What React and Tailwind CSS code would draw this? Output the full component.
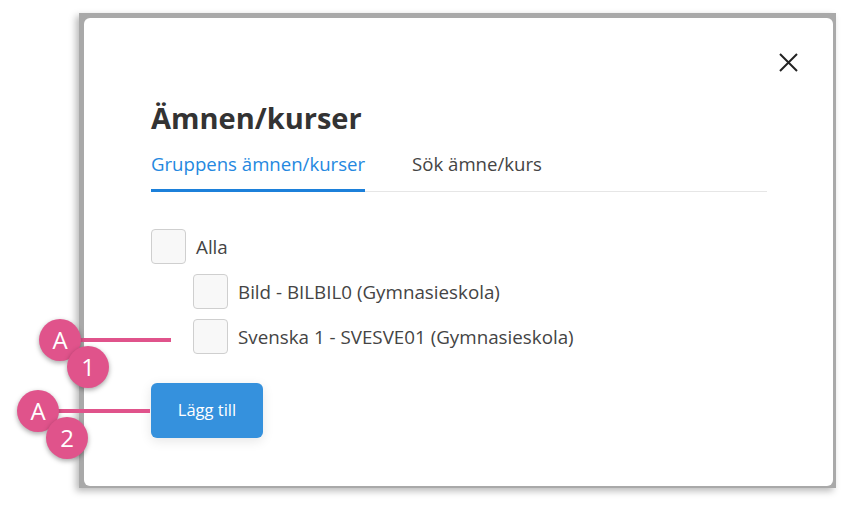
import { useState } from "react"

const items = [
  { id: "bild", label: "Bild - BILBIL0 (Gymnasieskola)" },
  { id: "svenska", label: "Svenska 1 - SVESVE01 (Gymnasieskola)" },
]

const Box = ({ checked, onClick }) => (
  <button
    onClick={onClick}
    className="w-[35px] h-[35px] shrink-0 rounded-[4px] border border-[#cfcfcf] bg-[#f8f8f8]"
  >
    {checked && <span className="text-[#2488e0] text-lg">✓</span>}
  </button>
)

const Badge = ({ children, className }) => (
  <div
    className={
      "absolute w-[42px] h-[42px] rounded-full bg-[#e0538b] text-white flex items-center justify-center text-[24px] shadow-[0_2px_5px_rgba(0,0,0,0.35)] " +
      className
    }
  >
    {children}
  </div>
)

const App = () => {
  const [tab, setTab] = useState(0)
  const [checked, setChecked] = useState({})

  const toggle = (id) => setChecked((prev) => ({ ...prev, [id]: !prev[id] }))

  return (
    <div className="relative w-[848px] h-[508px] bg-white overflow-hidden font-['Open_Sans',sans-serif]">
      {/* greyed page behind the modal */}
      <div className="ml-[79px] mt-[13px] w-[757px] h-[475px] bg-[#a9a9a9] pl-[5px] pt-[5px] pr-[3px] pb-[2px] flex shadow-[-3px_3px_7px_rgba(0,0,0,0.28)]">
        <div className="flex-1 bg-white rounded-[6px] flex flex-col">
          <div className="flex justify-end pt-[35px] pr-[35px]">
            <button className="w-[19px] h-[19px]">
              <svg viewBox="0 0 19 19" width="19" height="19">
                <path d="M1 1L18 18M18 1L1 18" stroke="#222" strokeWidth="2" fill="none" />
              </svg>
            </button>
          </div>

          <div className="pl-[67px] pr-[66px]">
            <h2 className="mt-[29px] text-[29px] leading-[34px] font-bold text-[#333]">Ämnen/kurser</h2>

            <div className="mt-[17px] flex gap-[47px] border-b border-[#e6e6e6]">
              <button
                onClick={() => setTab(0)}
                className={
                  "text-[18.6px] leading-[24px] pb-[13px] -mb-px border-b-[3px] " +
                  (tab === 0 ? "text-[#2488e0] border-[#1c80da]" : "text-[#444] border-transparent")
                }
              >
                Gruppens ämnen/kurser
              </button>
              <button
                onClick={() => setTab(1)}
                className={
                  "text-[18.6px] leading-[24px] pb-[13px] -mb-px border-b-[3px] " +
                  (tab === 1 ? "text-[#2488e0] border-[#1c80da]" : "text-[#444] border-transparent")
                }
              >
                Sök ämne/kurs
              </button>
            </div>

            <div className="mt-[37px] flex flex-col gap-[10px]">
              <div className="flex items-center gap-[10px]">
                <Box checked={checked.alla} onClick={() => toggle("alla")} />
                <span className="text-[18.8px] leading-[26px] text-[#444]">Alla</span>
              </div>
              {items.map((item) => (
                <div key={item.id} className="flex items-center gap-[10px] pl-[42px]">
                  <Box checked={checked[item.id]} onClick={() => toggle(item.id)} />
                  <span className="text-[18.8px] leading-[26px] text-[#444]">{item.label}</span>
                </div>
              ))}
            </div>

            <button className="mt-[29px] w-[112px] h-[55px] rounded-[6px] bg-[#3591dd] text-white text-[16.5px] shadow-[0_3px_12px_rgba(0,0,0,0.1)]">
              Lägg till
            </button>
          </div>
        </div>
      </div>

      {/* annotations */}
      <div className="absolute left-[78px] top-[338px] w-[93px] h-[4px] bg-[#e0538b]" />
      <Badge className="left-[39px] top-[319px]">A</Badge>
      <Badge className="left-[67px] top-[346px]">1</Badge>

      <div className="absolute left-[56px] top-[409px] w-[94px] h-[4px] bg-[#e0538b]" />
      <Badge className="left-[17px] top-[390px]">A</Badge>
      <Badge className="left-[46px] top-[417px]">2</Badge>
    </div>
  )
}

export default App
